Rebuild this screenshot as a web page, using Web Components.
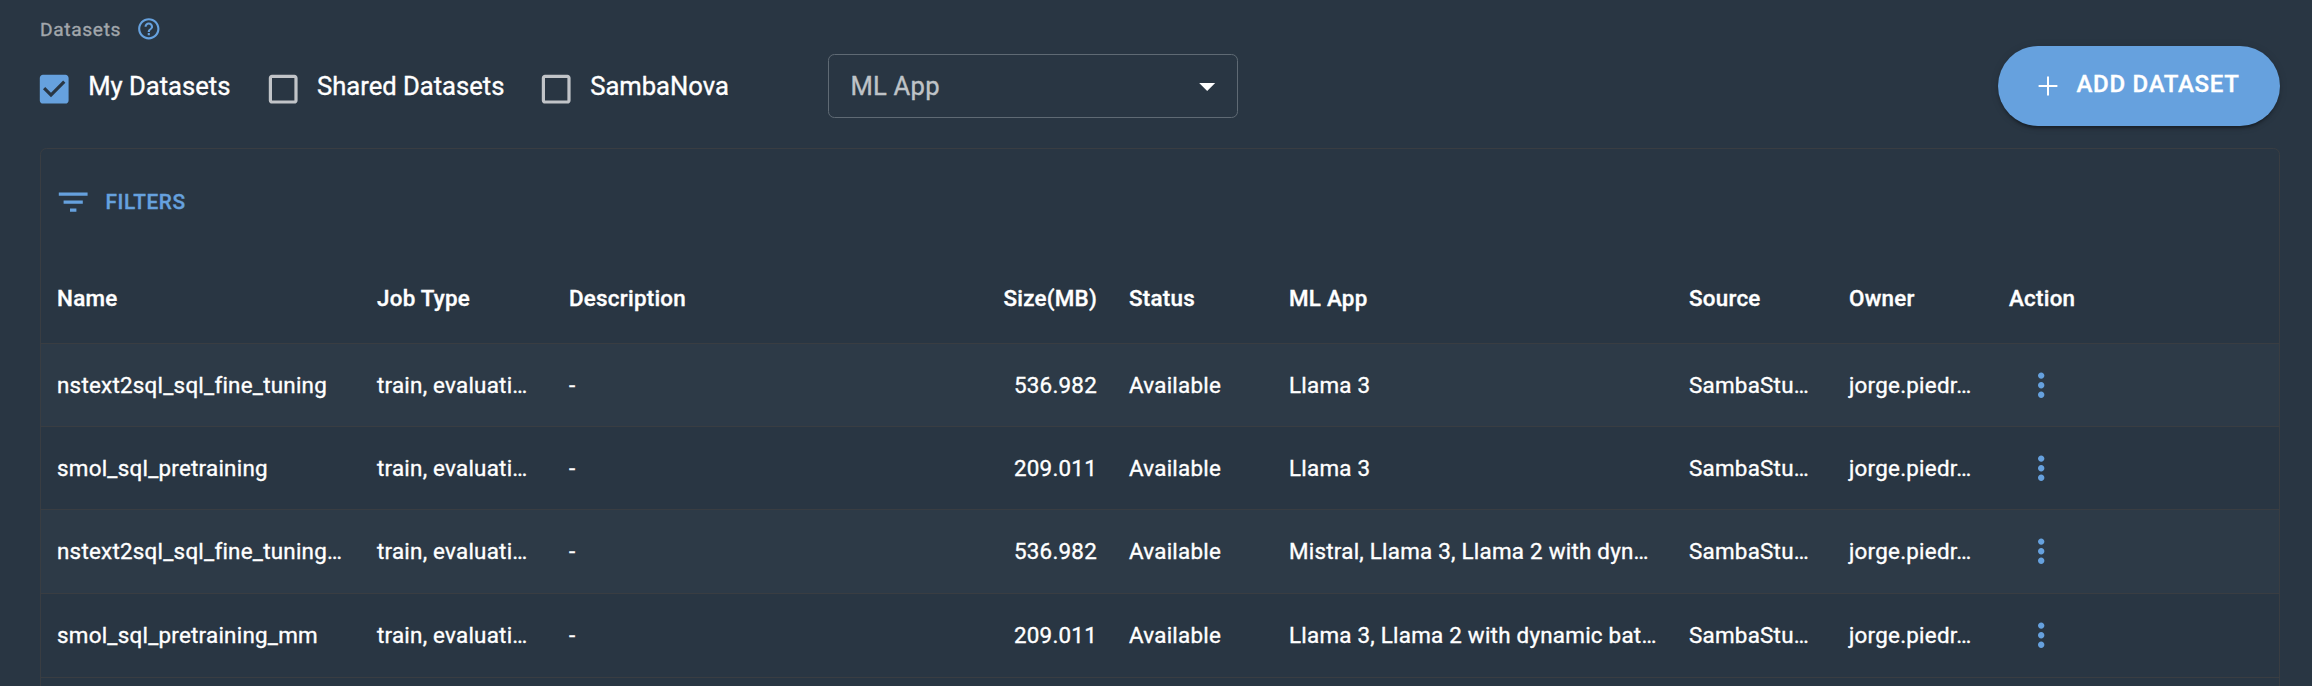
<!DOCTYPE html>
<html lang="en">
<head>
<meta charset="utf-8">
<title>Datasets</title>
<style>
html, body { margin: 0; height: 100%; background: #293643; overflow: hidden; }
body { font-family: Roboto, "Liberation Sans", sans-serif; color: #fff; -webkit-text-stroke: .35px currentColor; }
</style>
</head>
<body>
<datasets-page></datasets-page>
<script>
const define = (name, html, setup) => customElements.define(name, class extends HTMLElement {
  constructor() {
    super();
    this.attachShadow({ mode: 'open' }).innerHTML = html;
  }
  connectedCallback() { if (setup) setup(this, this.shadowRoot); }
});

const PATHS = {
  help: 'M11 18h2v-2h-2v2zm1-16C6.48 2 2 6.48 2 12s4.48 10 10 10 10-4.48 10-10S17.52 2 12 2zm0 18c-4.41 0-8-3.59-8-8s3.59-8 8-8 8 3.59 8 8-3.59 8-8 8zm0-14c-2.21 0-4 1.79-4 4h2c0-1.1.9-2 2-2s2 .9 2 2c0 2-3 1.75-3 5h2c0-2.25 3-2.5 3-5 0-2.21-1.79-4-4-4z',
  checked: 'M19 3H5c-1.11 0-2 .9-2 2v14c0 1.1.89 2 2 2h14c1.11 0 2-.9 2-2V5c0-1.1-.89-2-2-2zm-9 14l-5-5 1.41-1.41L10 14.17l7.59-7.59L19 8l-9 9z',
  unchecked: 'M19 5v14H5V5h14m0-2H5c-1.1 0-2 .9-2 2v14c0 1.1.9 2 2 2h14c1.1 0 2-.9 2-2V5c0-1.1-.9-2-2-2z',
  drop: 'M7 10l5 5 5-5z',
  filter: 'M10 18h4v-2h-4v2zM3 6v2h18V6H3zm3 7h12v-2H6v2z',
  more: 'M12 8c1.1 0 2-.9 2-2s-.9-2-2-2-2 .9-2 2 .9 2 2 2zm0 2c-1.1 0-2 .9-2 2s.9 2 2 2 2-.9 2-2-.9-2-2-2zm0 6c-1.1 0-2 .9-2 2s.9 2 2 2 2-.9 2-2-.9-2-2-2z'
};

define('ui-icon', `<style>
:host { display: block; flex: none; width: 38.4px; height: 38.4px; }
svg { display: block; width: 100%; height: 100%; fill: currentColor; }
</style><svg viewBox="0 0 24 24"><path/></svg>`,
(el, root) => root.querySelector('path').setAttribute('d', PATHS[el.getAttribute('name')]));

define('check-option', `<style>
:host { display: flex; flex: none; gap: 15px; align-items: flex-start; box-sizing: border-box; }
ui-icon { color: #c1c4c8; }
:host([on]) ui-icon { color: #66a1de; }
span { font-size: 25.6px; line-height: 32px; letter-spacing: 0; white-space: nowrap; }
</style><ui-icon></ui-icon><span><slot></slot></span>`,
(el, root) => {
  const icon = document.createElement('ui-icon');
  icon.setAttribute('name', el.hasAttribute('on') ? 'checked' : 'unchecked');
  root.querySelector('ui-icon').replaceWith(icon);
});

define('select-box', `<style>
:host { display: flex; flex: none; box-sizing: border-box; width: 410px; height: 64px; align-items: center;
  justify-content: space-between; padding: 0 10.5px 0 21.4px; border: 1px solid #5f6a74; border-radius: 6.4px; }
span { font-size: 25.6px; letter-spacing: .24px; color: #bfc3c7; line-height: 30px; }
</style><span><slot></slot></span><ui-icon name="drop"></ui-icon>`);

define('add-button', `<style>
:host { display: flex; flex: none; box-sizing: border-box; width: 282px; height: 80px; border-radius: 40px;
  align-items: center; padding-left: 34px; gap: 12.5px; background: #66a1de;
  box-shadow: 0 5px 2px -3px rgba(0,0,0,.2), 0 3px 3px rgba(0,0,0,.14), 0 1px 8px rgba(0,0,0,.12); }
svg { width: 32px; height: 32px; display: block; }
span { font-size: 24px; font-weight: 500; letter-spacing: .7px; line-height: 30px; margin-top: -4px; white-space: nowrap; }
</style><svg viewBox="0 0 32 32"><path d="M6.6 16h18.8M16 6.6v18.8" stroke="#fff" stroke-width="2" fill="none"/></svg><span><slot></slot></span>`);

const COLS = 'grid-template-columns: 320px 192px 400px 160px 160px 400px 160px 160px 96px;';
const COLS_SPLIT = COLS.replace('192px 400px 160px', '192px 400px 160px');

define('grid-head', `<style>
:host { display: grid; ${COLS} height: 106px; align-items: center; box-sizing: border-box; padding-top: 15px; border-bottom: 1px solid #393d42; }
span { padding: 0 16px; font-size: 22.4px; font-weight: 500; letter-spacing: .24px; line-height: 28px; white-space: nowrap; }
span:nth-of-type(4) { text-align: right; }
</style>`,
(el, root) => {
  for (const t of ['Name', 'Job Type', 'Description', 'Size(MB)', 'Status', 'ML App', 'Source', 'Owner', 'Action']) {
    const s = document.createElement('span');
    s.textContent = t;
    root.append(s);
  }
});

define('grid-row', `<style>
:host { display: grid; ${COLS} height: var(--h, 83px); align-items: center; box-sizing: border-box; border-bottom: 1px solid #393d42; }
:host([alt]) { background: #2d3a47; }
span { padding: 0 16px; margin-top: -1px; font-size: 22.4px; letter-spacing: .24px; line-height: 30px; white-space: nowrap; }
span:nth-of-type(4) { text-align: right; }
ui-icon { color: #66a1de; margin-left: 29px; }
</style>`,
(el, root) => {
  for (const t of el.getAttribute('cells').split('|')) {
    const s = document.createElement('span');
    s.textContent = t;
    root.append(s);
  }
  const icon = document.createElement('ui-icon');
  icon.setAttribute('name', 'more');
  root.append(icon);
});

define('data-panel', `<style>
:host { display: flex; flex-direction: column; box-sizing: border-box; height: 600px; border: 1px solid #393d42; border-radius: 6.4px; }
.filters { display: flex; flex: none; height: 89px; box-sizing: border-box; padding: 33.5px 0 0 13px; gap: 13px; color: #66a1de; }
.filters span { font-size: 20.8px; font-weight: 500; letter-spacing: .6px; line-height: 38px; }
grid-head, grid-row { flex: none; }
</style>
<div class="filters"><ui-icon name="filter"></ui-icon><span>FILTERS</span></div>
<grid-head></grid-head>
<grid-row alt cells="nstext2sql_sql_fine_tuning|train, evaluati…|-|536.982|Available|Llama 3|SambaStu…|jorge.piedr…"></grid-row>
<grid-row cells="smol_sql_pretraining|train, evaluati…|-|209.011|Available|Llama 3|SambaStu…|jorge.piedr…"></grid-row>
<grid-row alt style="--h:84px" cells="nstext2sql_sql_fine_tuning…|train, evaluati…|-|536.982|Available|Mistral, Llama 3, Llama 2 with dyn…|SambaStu…|jorge.piedr…"></grid-row>
<grid-row style="--h:84px" cells="smol_sql_pretraining_mm|train, evaluati…|-|209.011|Available|Llama 3, Llama 2 with dynamic bat…|SambaStu…|jorge.piedr…"></grid-row>`);

define('datasets-page', `<style>
:host { display: block; box-sizing: border-box; width: 2312px; height: 686px; padding: 0 32px 0 40px; overflow: hidden; }
header { display: flex; height: 148px; }
.left { display: flex; flex-direction: column; width: 788px; }
.title { display: flex; gap: 14.5px; padding-top: 16px; height: 54px; box-sizing: border-box; }
.title span { font-size: 19.2px; letter-spacing: .64px; line-height: 27px; color: #a2a7ac; }
.title ui-icon { width: 25.6px; height: 25.6px; color: #66a1de; }
.checks { display: flex; padding-top: 15.8px; margin-left: -5.2px; }
select-box { margin-top: 54px; }
add-button { margin: 46px 0 0 auto; }
</style>
<header>
  <div class="left">
    <div class="title"><span>Datasets</span><ui-icon name="help"></ui-icon></div>
    <div class="checks">
      <check-option on style="width:228.8px">My Datasets</check-option>
      <check-option style="width:273.2px">Shared Datasets</check-option>
      <check-option>SambaNova</check-option>
    </div>
  </div>
  <select-box>ML App</select-box>
  <add-button>ADD DATASET</add-button>
</header>
<data-panel></data-panel>`);
</script>
</body>
</html>
